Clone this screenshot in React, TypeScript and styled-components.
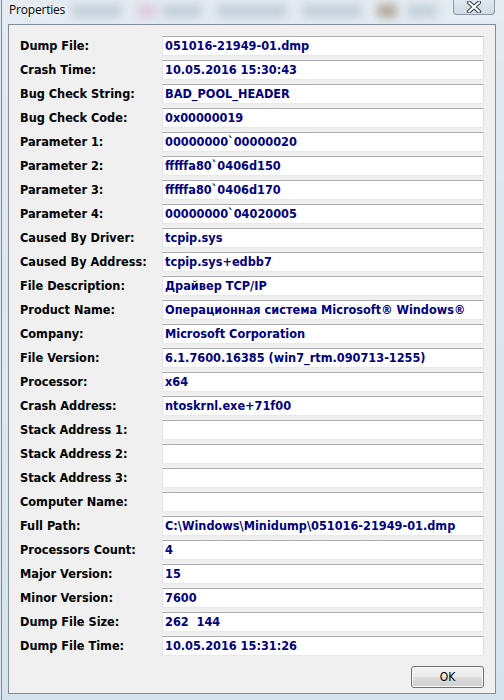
import React from "react";
import styled, { createGlobalStyle } from "styled-components";

const Global = createGlobalStyle`
  html, body { margin: 0; padding: 0; background: #dfe8f0; }
  #root { width: 504px; height: 700px; }
`;

const Window = styled.div`
  position: relative;
  width: 503px;
  height: 700px;
  box-sizing: border-box;
  overflow: hidden;
  background: linear-gradient(180deg, #e4ebf1 0%, #dde7ef 40%, #d7e3ec 100%);
  border-left: 1px solid #7c8894;
  margin-left: 1px;
  display: flex;
  flex-direction: column;
`;

const Blur = styled.div<{ $l: number; $w: number; $c: string }>`
  position: absolute;
  top: 4px;
  left: ${(p) => p.$l}px;
  width: ${(p) => p.$w}px;
  height: 14px;
  background: ${(p) => p.$c};
  filter: blur(4px);
  opacity: 0.5;
  border-radius: 4px;
`;

const TitleBar = styled.div`
  position: relative;
  height: 24px;
  display: flex;
  align-items: flex-start;
  padding-left: 7px;
  flex: none;
`;

const Title = styled.div`
  position: relative;
  font-family: "Segoe UI", "Open Sans", "Noto Sans", sans-serif;
  font-size: 12px;
  color: #000;
  line-height: 16px;
  margin-top: 2px;
  letter-spacing: -0.2px;
  text-shadow: 0 0 6px #ffffff, 0 0 8px #ffffff;
`;

const CloseButton = styled.div`
  position: relative;
  margin-left: auto;
  margin-right: 9px;
  width: 42px;
  height: 15px;
  box-sizing: border-box;
  border: 1px solid #8f9aa6;
  border-top: none;
  border-radius: 0 0 4px 4px;
  background: linear-gradient(180deg, rgba(220,230,240,0.6), rgba(200,212,224,0.7));
  display: flex;
  align-items: center;
  justify-content: center;
`;

const Client = styled.div`
  margin-left: 6px;
  width: 488px;
  height: 670px;
  box-sizing: border-box;
  border: 1px solid #838d99;
  background: #f0f0f0;
  padding: 11px 11px 0 11px;
  display: flex;
  flex-direction: column;
`;

const Grid = styled.div`
  display: grid;
  grid-template-columns: 142px 322px;
  row-gap: 4px;
`;

const Label = styled.div`
  font-family: "DejaVu Sans Condensed", "DejaVu Sans", sans-serif;
  font-weight: bold;
  font-size: 12.6px;
  color: #000;
  height: 20px;
  line-height: 20px;
  white-space: nowrap;
`;

const Field = styled.div`
  box-sizing: border-box;
  height: 20px;
  background: #fff;
  border-top: 1px solid #abadb3;
  border-left: 1px solid #e2e3ea;
  border-right: 1px solid #dbdfe6;
  border-bottom: 1px solid #e3e9ef;
  padding-left: 2px;
  font-family: "DejaVu Sans Condensed", "DejaVu Sans", sans-serif;
  font-weight: bold;
  font-size: 12.6px;
  line-height: 18px;
  color: #000080;
  white-space: pre;
  overflow: hidden;
`;

const Footer = styled.div`
  display: flex;
  justify-content: flex-end;
  margin-top: 10px;
`;

const Button = styled.button`
  width: 73px;
  height: 22px;
  box-sizing: border-box;
  border: 1px solid #707070;
  border-radius: 3px;
  background: linear-gradient(180deg, #f2f2f2 0%, #ebebeb 48%, #dddddd 52%, #cfcfcf 100%);
  box-shadow: inset 0 0 0 1px #fcfcfc;
  font-family: "DejaVu Sans Condensed", "DejaVu Sans", sans-serif;
  font-size: 12px;
  color: #000;
  padding: 0;
`;

const rows: [string, string][] = [
  ["Dump File:", "051016-21949-01.dmp"],
  ["Crash Time:", "10.05.2016 15:30:43"],
  ["Bug Check String:", "BAD_POOL_HEADER"],
  ["Bug Check Code:", "0x00000019"],
  ["Parameter 1:", "00000000`00000020"],
  ["Parameter 2:", "fffffa80`0406d150"],
  ["Parameter 3:", "fffffa80`0406d170"],
  ["Parameter 4:", "00000000`04020005"],
  ["Caused By Driver:", "tcpip.sys"],
  ["Caused By Address:", "tcpip.sys+edbb7"],
  ["File Description:", "Драйвер TCP/IP"],
  ["Product Name:", "Операционная система Microsoft® Windows®"],
  ["Company:", "Microsoft Corporation"],
  ["File Version:", "6.1.7600.16385 (win7_rtm.090713-1255)"],
  ["Processor:", "x64"],
  ["Crash Address:", "ntoskrnl.exe+71f00"],
  ["Stack Address 1:", ""],
  ["Stack Address 2:", ""],
  ["Stack Address 3:", ""],
  ["Computer Name:", ""],
  ["Full Path:", "C:\\Windows\\Minidump\\051016-21949-01.dmp"],
  ["Processors Count:", "4"],
  ["Major Version:", "15"],
  ["Minor Version:", "7600"],
  ["Dump File Size:", "262  144"],
  ["Dump File Time:", "10.05.2016 15:31:26"],
];

export default function App() {
  return (
    <>
      <Global />
      <Window>
        <Blur $l={70} $w={50} $c="#aab8c6" />
        <Blur $l={135} $w={20} $c="#d8b0c8" />
        <Blur $l={160} $w={40} $c="#aab8c6" />
        <Blur $l={215} $w={70} $c="#aab8c6" />
        <Blur $l={300} $w={60} $c="#aab8c6" />
        <Blur $l={375} $w={20} $c="#8a7050" />
        <Blur $l={405} $w={30} $c="#aab8c6" />
        <TitleBar>
          <Title>Properties</Title>
          <CloseButton>
            <svg width="16" height="12" viewBox="0 0 16 12">
              <path
                d="M3 1.5 L13 10.5 M13 1.5 L3 10.5"
                stroke="#3a3f46"
                strokeWidth="4.2"
                strokeLinecap="round"
              />
              <path
                d="M3 1.5 L13 10.5 M13 1.5 L3 10.5"
                stroke="#ffffff"
                strokeWidth="2.2"
                strokeLinecap="round"
              />
            </svg>
          </CloseButton>
        </TitleBar>
        <Client>
          <Grid>
            {rows.map(([l, v]) => (
              <React.Fragment key={l}>
                <Label>{l}</Label>
                <Field>{v}</Field>
              </React.Fragment>
            ))}
          </Grid>
          <Footer>
            <Button>OK</Button>
          </Footer>
        </Client>
      </Window>
    </>
  );
}
